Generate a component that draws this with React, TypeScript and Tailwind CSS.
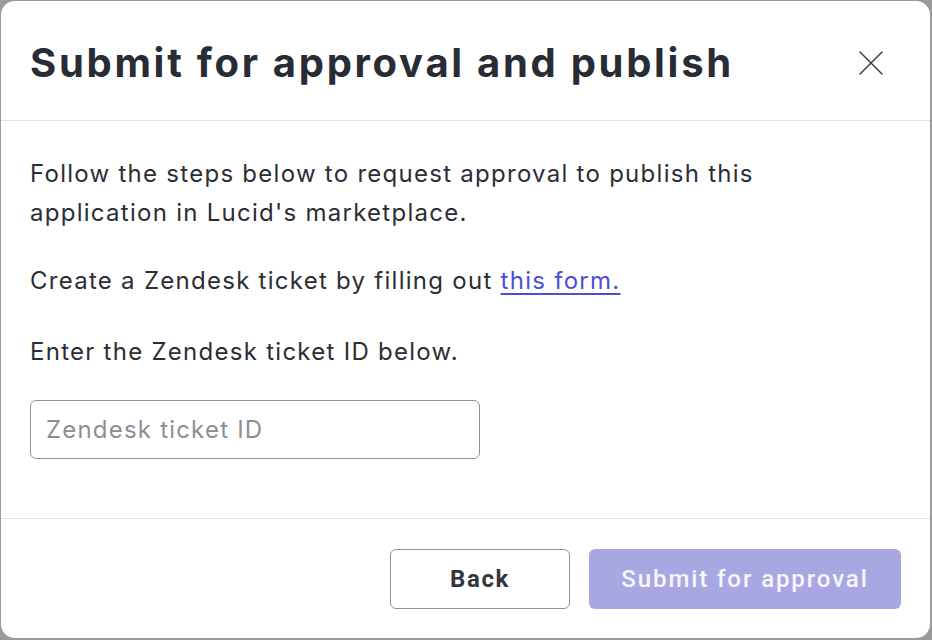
export default function App() {
  return (
    <div className="w-[932px] h-[640px] bg-[#9a9a9a] pl-px pt-px pr-[2px] pb-[2px]">
      <div className="flex h-full flex-col rounded-[14px] bg-white font-['Inter',sans-serif] text-[#2a2e36]">
        {/* Header */}
        <div className="flex h-[120px] items-center justify-between border-b border-[#dfe2e6] pt-[4px] pl-[29px] pr-[47px]">
          <h1 className="text-[40px] font-bold tracking-[2.7px] text-[#282c34]">
            Submit for approval and publish
          </h1>
          <button className="text-[#3a3d44]">
            <svg width="24" height="24" viewBox="0 0 24 24" fill="none" stroke="currentColor" strokeWidth="1.5" strokeLinecap="round">
              <path d="M1 1L23 23M23 1L1 23" />
            </svg>
          </button>
        </div>

        {/* Body */}
        <div className="flex flex-1 flex-col pl-[29px] pt-[33px] text-[24px] leading-[39px] tracking-[1.27px]">
          <p>
            Follow the steps below to request approval to publish this
            <br />
            application in Lucid's marketplace.
          </p>
          <p className="mt-[29px]">
            Create a Zendesk ticket by filling out{" "}
            <a href="#" className="text-[#4a4ed6] underline underline-offset-4">
              this form.
            </a>
          </p>
          <p className="mt-[32px]">Enter the Zendesk ticket ID below.</p>
          <input
            placeholder="Zendesk ticket ID"
            className="mt-[29px] h-[59px] w-[450px] rounded-[6px] border border-[#8f949c] px-[15px] text-[24px] tracking-[1.2px] placeholder:text-[#8a8f97]"
          />
        </div>

        {/* Footer */}
        <div className="flex h-[120px] items-center justify-end gap-[19px] border-t border-[#dfe2e6] pr-[29px]">
          <button className="h-[60px] w-[180px] rounded-[6px] border border-[#8f949c] font-['Roboto',sans-serif] text-[24px] font-bold tracking-[1.6px] text-[#33363d]">
            Back
          </button>
          <button className="h-[60px] w-[312px] rounded-[6px] bg-[#a7a8e2] font-['Roboto',sans-serif] text-[24px] font-medium tracking-[1.9px] text-white/90">
            Submit for approval
          </button>
        </div>
      </div>
    </div>
  );
}
